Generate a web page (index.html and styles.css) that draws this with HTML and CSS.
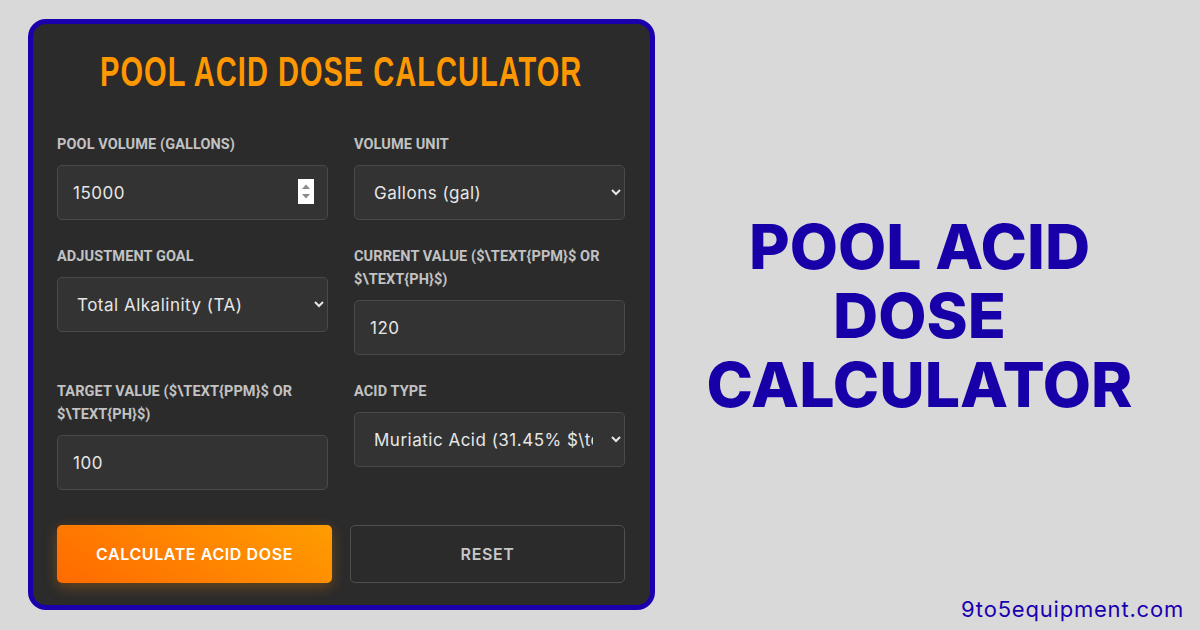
FILE: index.html
```html
<!DOCTYPE html>
<html lang="en">
<head>
    <meta charset="UTF-8">
    <meta name="viewport" content="width=device-width, initial-scale=1.0">
    <title>Pool Acid Dose Calculator</title>
    <link rel="stylesheet" href="styles.css">
</head>
<body>
    <div class="calculator">
        <h1 class="title"><span>Pool Acid Dose Calculator</span></h1>

        <div class="fields">
            <div class="field">
                <label for="volume">Pool Volume (Gallons)</label>
                <div class="number-wrap">
                    <input type="number" id="volume" value="15000">
                    <span class="spinner">
                        <svg width="16" height="25" viewBox="0 0 16 25">
                            <rect width="16" height="25" fill="#ffffff"/>
                            <path d="M4 10 L8 5.5 L12 10 Z" fill="#8a8a8a"/>
                            <path d="M4 15 L8 19.5 L12 15 Z" fill="#8a8a8a"/>
                        </svg>
                    </span>
                </div>
            </div>
            <div class="field">
                <label for="unit">Volume Unit</label>
                <select id="unit">
                    <option>Gallons (gal)</option>
                    <option>Liters (L)</option>
                </select>
            </div>

            <div class="field">
                <label for="goal">Adjustment Goal</label>
                <select id="goal">
                    <option>Total Alkalinity (TA)</option>
                    <option>pH</option>
                </select>
            </div>
            <div class="field">
                <label for="current">Current Value ($\text{ppm}$ or $\text{pH}$)</label>
                <input type="number" id="current" value="120">
            </div>

            <div class="field">
                <label for="target">Target Value ($\text{ppm}$ or $\text{pH}$)</label>
                <input type="number" id="target" value="100">
            </div>
            <div class="field">
                <label for="acid">Acid Type</label>
                <select id="acid">
                    <option>Muriatic Acid (31.45% $\text{HCl}$)</option>
                    <option>Dry Acid (Sodium Bisulfate)</option>
                </select>
            </div>
        </div>

        <div class="actions">
            <button class="btn btn-primary">Calculate Acid Dose</button>
            <button class="btn btn-reset">Reset</button>
        </div>
    </div>

    <div class="side">
        <h2 class="headline">Pool Acid<br>Dose<br>Calculator</h2>
        <div class="site">9to5equipment.com</div>
    </div>
</body>
</html>
```

FILE: styles.css
```css
body {
    margin: 0;
    height: 630px;
    display: flex;
    background-color: #d9d9d9;
    font-family: Inter, "Liberation Sans", sans-serif;
    overflow: hidden;
}
.calculator {
    align-self: flex-start;
    margin: 19px 0 0 28px;
    width: 627px;
    box-sizing: border-box;
    padding: 24px 25px 22px 24px;
    background: #2b2b2b;
    border: 5px solid #1a00ad;
    border-radius: 18px;
}
.title {
    display: flex;
    justify-content: center;
    margin: -3px 0 36px;
    white-space: nowrap;
    font-family: "Liberation Sans", Arial, sans-serif;
    font-weight: bold;
    font-size: 43px;
    line-height: 52px;
    letter-spacing: 1.5px;
    text-transform: uppercase;
    color: #ff9800;
}
.title span {
    transform: scaleX(0.675);
}
.fields {
    display: grid;
    grid-template-columns: 1fr 1fr;
    column-gap: 26px;
    row-gap: 25px;
    align-items: start;
}
.field label {
    display: block;
    margin-bottom: 9px;
    font-family: Roboto, "Liberation Sans", sans-serif;
    font-weight: bold;
    font-size: 14.5px;
    line-height: 23px;
    letter-spacing: 0.1px;
    text-transform: uppercase;
    color: #c2c2c2;
}
input, select {
    display: block;
    width: 100%;
    box-sizing: border-box;
    height: 55px;
    padding: 0 15px;
    background: #333333;
    border: 1px solid #4a4a4a;
    border-radius: 5px;
    color: #e6e6e6;
    font-family: Inter, "Liberation Sans", sans-serif;
    font-size: 17px;
    letter-spacing: 0.5px;
    color-scheme: dark;
}
input::-webkit-inner-spin-button {
    -webkit-appearance: none;
}
.number-wrap {
    position: relative;
}
.spinner {
    position: absolute;
    right: 14px;
    top: 14px;
    line-height: 0;
}
.actions {
    display: grid;
    grid-template-columns: 1fr 1fr;
    gap: 18px;
    margin-top: 35px;
}
.btn {
    height: 58px;
    border-radius: 5px;
    font-family: Inter, "Liberation Sans", sans-serif;
    font-size: 16px;
    font-weight: 600;
    letter-spacing: 0.6px;
    text-transform: uppercase;
    cursor: pointer;
}
.btn-primary {
    border: none;
    color: #ffffff;
    background: linear-gradient(30deg, #ff6a00, #ff9d00);
    box-shadow: 0 4px 14px rgba(255, 140, 0, 0.3);
}
.btn-reset {
    background: transparent;
    border: 1px solid #505050;
    color: #c8c8c8;
}
.side {
    flex: 1;
    display: grid;
    grid-template-rows: 1fr auto 1fr;
}
.headline {
    grid-row: 2;
    margin: 0 16px 0 0;
    text-align: center;
    font-family: Inter, "Liberation Sans", sans-serif;
    font-weight: 800;
    font-size: 62.5px;
    line-height: 69px;
    text-transform: uppercase;
    color: #1700a8;
}
.site {
    grid-row: 3;
    align-self: end;
    justify-self: end;
    margin: 0 16px 8px 0;
    font-family: Inter, "Liberation Sans", sans-serif;
    font-size: 22px;
    letter-spacing: 0.8px;
    color: #1a00b0;
}
```
